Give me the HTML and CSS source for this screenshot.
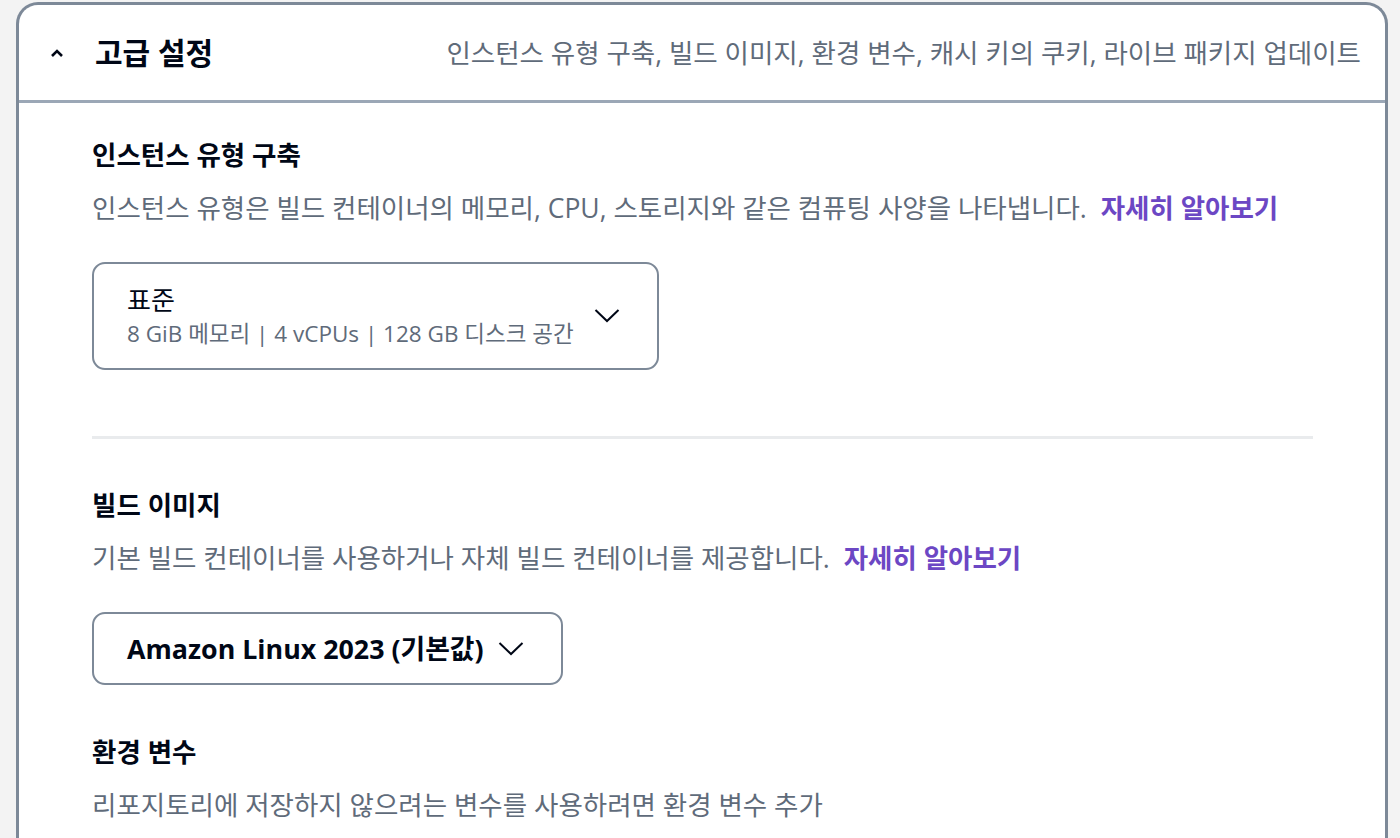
FILE: index.html
```html
<!DOCTYPE html>
<html lang="ko">
	<head>
		<meta charset="utf-8">
		<title>고급 설정</title>
		<link rel="stylesheet" href="styles.css">
	</head>
	<body>
		<section class="panel">
			<header class="panel-header">
				<svg class="caret" width="14" height="10" viewBox="0 0 14 10"><path d="M2 8 L7 3 L12 8" fill="none" stroke="#000716" stroke-width="2.6"/></svg>
				<h2 class="panel-title">고급 설정</h2>
				<span class="panel-summary">인스턴스 유형 구축, 빌드 이미지, 환경 변수, 캐시 키의 쿠키, 라이브 패키지 업데이트</span>
			</header>
			<div class="panel-body">
				<div class="field">
					<h3 class="field-label">인스턴스 유형 구축</h3>
					<p class="field-desc">인스턴스 유형은 빌드 컨테이너의 메모리, CPU, 스토리지와 같은 컴퓨팅 사양을 나타냅니다. <a href="#" class="learn">자세히 알아보기</a></p>
					<button class="select select-tall">
						<span class="select-text">
							<span class="select-main">표준</span>
							<span class="select-sub">8 GiB 메모리 | 4 vCPUs | 128 GB 디스크 공간</span>
						</span>
						<svg class="chevron" width="26" height="16" viewBox="0 0 26 16"><path d="M1.5 2 L13 13 L24.5 2" fill="none" stroke="#000716" stroke-width="2"/></svg>
					</button>
				</div>
				<hr class="divider">
				<div class="field">
					<h3 class="field-label">빌드 이미지</h3>
					<p class="field-desc">기본 빌드 컨테이너를 사용하거나 자체 빌드 컨테이너를 제공합니다. <a href="#" class="learn">자세히 알아보기</a></p>
					<button class="select select-short">
						<span class="select-strong">Amazon Linux 2023 (기본값)</span>
						<svg class="chevron" width="26" height="16" viewBox="0 0 26 16"><path d="M1.5 2 L13 13 L24.5 2" fill="none" stroke="#000716" stroke-width="2"/></svg>
					</button>
				</div>
				<div class="field">
					<h3 class="field-label">환경 변수</h3>
					<p class="field-desc">리포지토리에 저장하지 않으려는 변수를 사용하려면 환경 변수 추가</p>
				</div>
			</div>
		</section>
	</body>
</html>
```

FILE: styles.css
```css
html {
	font-family: 'Open Sans', 'Noto Sans CJK KR', sans-serif;
}
body {
	margin: 0;
	padding: 2px 12px 0 16px;
	background-color: #f3f3f3;
	color: #000716;
	height: 836px;
	overflow: hidden;
}
.panel {
	background-color: #fff;
	border: 3px solid #7d8998;
	border-bottom: none;
	border-radius: 22px 22px 0 0;
	height: 100%;
}
.panel-header {
	display: flex;
	align-items: center;
	height: 95px;
	padding: 0 24px 0 31px;
	border-bottom: 3px solid #9ba7b6;
}
.caret {
	margin-right: 31px;
}
.panel-title {
	margin: 0;
	font-size: 30px;
	line-height: 40px;
	font-weight: 700;
}
.panel-summary {
	margin-left: auto;
	font-size: 26.5px;
	line-height: 36px;
	color: #5f6b7a;
}
.panel-body {
	padding: 36px 72px 0 73px;
}
.field {
	margin-bottom: 51px;
}
.field-label {
	margin: 0;
	font-size: 26.5px;
	line-height: 32px;
	font-weight: 700;
}
.field-desc {
	margin: 21px 0 0;
	font-size: 26.5px;
	line-height: 32px;
	color: #5f6b7a;
}
.learn {
	margin-left: 7px;
	color: #6c47c4;
	font-weight: 700;
	text-decoration: none;
}
.select {
	display: flex;
	align-items: center;
	margin-top: 38px;
	background: #fff;
	border: 2px solid #7d8998;
	border-radius: 13px;
	font: inherit;
	color: inherit;
	text-align: left;
	padding: 0 37px 0 33px;
}
.select-tall {
	width: 567px;
	height: 108px;
	justify-content: space-between;
}
.select-short {
	height: 73px;
	gap: 14px;
}
.select-text {
	display: flex;
	flex-direction: column;
}
.select-main {
	font-size: 26px;
	line-height: 36px;
}
.select-sub {
	font-size: 22.5px;
	line-height: 32px;
	color: #5f6b7a;
}
.select-strong {
	font-size: 26.8px;
	line-height: 34px;
	font-weight: 700;
}
.chevron {
	flex: none;
}
.divider {
	margin: 66px 0 50px;
	border: none;
	height: 3px;
	background-color: #e9ebed;
}
```
